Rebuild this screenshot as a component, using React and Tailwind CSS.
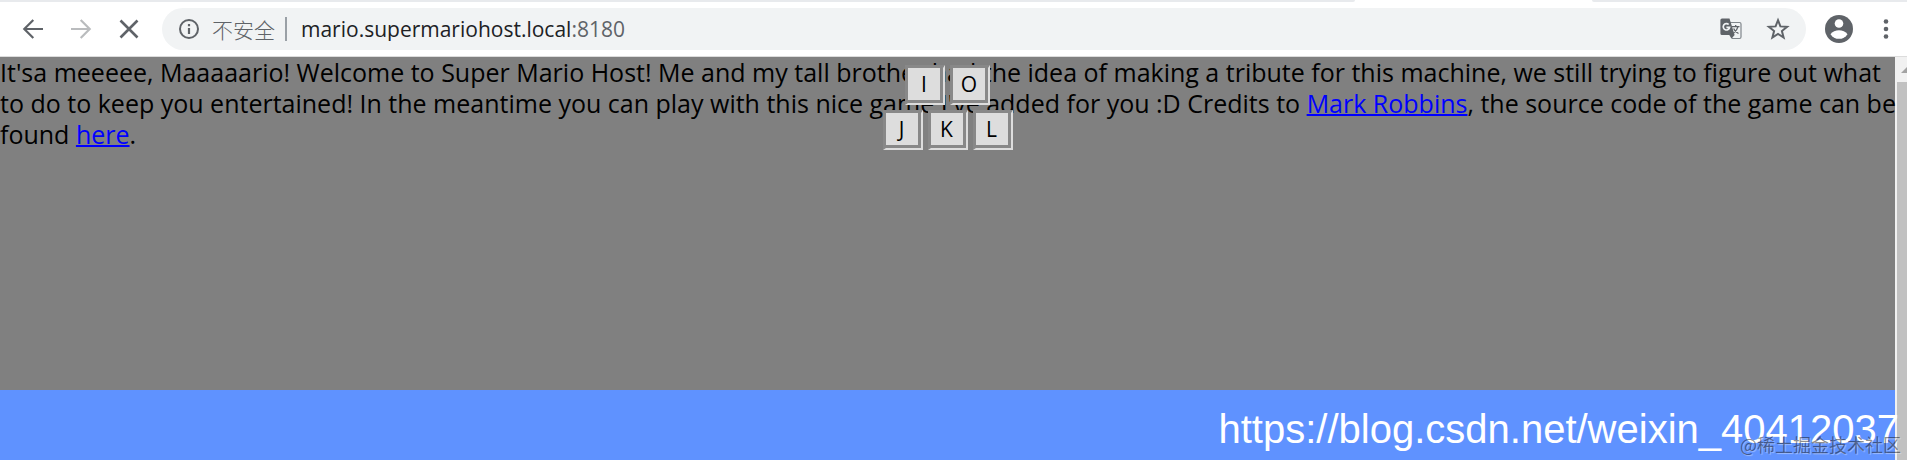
import { useState } from "react";

const KEY_ROWS = [
    ["I", "O"],
    ["J", "K", "L"],
];

function TranslateIcon() {
    return (
        <svg viewBox="0 0 22 22" className="size-[22px]">
            <path d="M9 4.500h10.500a1.500 1.500 0 0 1 1.500 1.500v13a1.500 1.500 0 0 1-1.500 1.500H12" fill="none" stroke="#80868b" strokeWidth="1.2" />
            <path d="M2 .5h7.500L14.600 17H2A1.600 1.600 0 0 1 .4 15.400V2.100A1.600 1.600 0 0 1 2 .5z" fill="#5f6368" />
            <path d="M9.300 17h5.300l-3.100 3.800z" fill="#5f6368" />
            <path d="M8.700 6.500A3.200 3.200 0 1 0 9.600 9.300H6.400" fill="none" stroke="#f1f3f4" strokeWidth="1.7" />
            <path d="M12 8.700h7.500M15.700 7v1.700M18 8.700c-.6 2.600-2.200 4.700-4.400 6.200M13.600 10.500c.9 2 2.600 3.900 4.900 5" fill="none" stroke="#5f6368" strokeWidth="1.3" />
        </svg>
    );
}

function Toolbar() {
    const [host, setHost] = useState("mario.supermariohost.local");

    return (
        <header className="bg-white border-b border-[#dcdcdc]">
            {/* Bottom edge of the tab strip, with the gap of the active tab */}
            <div className="flex h-0.5">
                <div className="flex-1 bg-[#e8eaed] rounded-br-sm" />
                <div className="w-[237px]" />
                <div className="w-[315px] bg-[#e8eaed] rounded-bl-sm" />
            </div>

            <div className="flex items-center h-[54px] pl-[21px] pr-[14px]">
                <div className="flex items-center gap-6 text-[#5f6368]">
                    <button aria-label="Back" className="size-6">
                        <svg viewBox="0 0 24 24" fill="none" stroke="currentColor" strokeWidth="2.2">
                            <path d="M22 12H3.500M12.300 3L3.300 12l9 9" />
                        </svg>
                    </button>
                    <button aria-label="Forward" className="size-6 text-[#babcbe]">
                        <svg viewBox="0 0 24 24" fill="none" stroke="currentColor" strokeWidth="2.2">
                            <path d="M2 12h18.500M11.700 3l9 9-9 9" />
                        </svg>
                    </button>
                    <button aria-label="Stop" className="size-6">
                        <svg viewBox="0 0 24 24" fill="none" stroke="currentColor" strokeWidth="2.6">
                            <path d="M3.500 3.500l17 17M20.500 3.500l-17 17" />
                        </svg>
                    </button>
                </div>

                <div className="flex flex-1 items-center h-[42px] ml-[21px] pl-4 pr-4 rounded-full bg-[#f1f3f4]">
                    <button aria-label="Site information" className="size-[22px] text-[#5f6368]">
                        <svg viewBox="0 0 22 22" fill="none" stroke="currentColor" strokeWidth="2">
                            <circle cx="11" cy="11" r="9" />
                            <path d="M11 10v6M11 6v2.200" strokeWidth="2.2" />
                        </svg>
                    </button>
                    <span className="ml-3 text-[21px] leading-6 font-light text-[#5f6368] font-['Noto_Sans_CJK_SC',sans-serif]">不安全</span>
                    <div className="w-0.5 h-6 ml-2.5 bg-[#9aa0a6]" />
                    <div className="flex flex-1 ml-3.5 text-[21px] leading-6">
                        <input
                            aria-label="Address"
                            value={host}
                            onChange={(e) => setHost(e.target.value)}
                            className="field-sizing-content text-[#202124] outline-none"
                        />
                        <span className="text-[#5f6368]">:8180</span>
                    </div>
                    <button aria-label="Translate this page">
                        <TranslateIcon />
                    </button>
                    <button aria-label="Bookmark" className="ml-6 size-6 text-[#5f6368]">
                        <svg viewBox="0 0 24 24" fill="none" stroke="currentColor" strokeWidth="2">
                            <path d="M12 3.200l2.400 6.200 6.700.4-5.200 4.200 1.700 6.500-5.600-3.600-5.600 3.600 1.700-6.500-5.200-4.200 6.700-.4z" />
                        </svg>
                    </button>
                </div>

                <button aria-label="Profile" className="ml-[19px] size-7">
                    <svg viewBox="0 0 28 28">
                        <circle cx="14" cy="14" r="14" fill="#5f6368" />
                        <circle cx="14" cy="8.500" r="4.300" fill="#fff" />
                        <path d="M5.500 19.300c1.700-2.700 5.300-4 8.500-4s6.800 1.300 8.500 4a10.200 10.200 0 0 1-17 0z" fill="#fff" />
                    </svg>
                </button>
                <button aria-label="Menu" className="ml-[26px] w-[14px] text-[#5f6368]">
                    <svg viewBox="0 0 14 24" fill="currentColor">
                        <circle cx="7" cy="4.500" r="2.300" />
                        <circle cx="7" cy="12" r="2.300" />
                        <circle cx="7" cy="19.500" r="2.300" />
                    </svg>
                </button>
            </div>
        </header>
    );
}

function Keypad() {
    return (
        <div className="absolute inset-x-0 top-2 flex flex-col items-center gap-[5px]">
            {KEY_ROWS.map((row) => (
                <div key={row[0]} className="flex gap-[5px]">
                    {row.map((k) => (
                        <button
                            key={k}
                            className="size-10 border-t-[3px] border-l-[3px] border-b-2 border-r-2 border-t-[#888] border-l-[#888] border-b-[#ddd] border-r-[#ddd]"
                        >
                            <span className="flex items-center justify-center size-full bg-[#ddd] border-r-[3px] border-b-[3px] border-[#888] text-[21px] leading-6">
                                {k}
                            </span>
                        </button>
                    ))}
                </div>
            ))}
        </div>
    );
}

function Scrollbar() {
    return (
        <div className="flex flex-col w-3 shrink-0 pl-0.5 overflow-hidden bg-[#f1f1f1]">
            <div className="flex items-center h-[25px] pl-1">
                <svg viewBox="0 0 12 6" className="w-3 h-1.5 shrink-0">
                    <path d="M0 6l6-6 6 6z" fill="#a3a3a3" />
                </svg>
            </div>
            <div className="flex-1 bg-[#c1c1c1]" />
        </div>
    );
}

export default function App() {
    return (
        <div className="relative flex flex-col min-h-screen overflow-hidden font-['Open_Sans','Noto_Sans',sans-serif]">
            <Toolbar />

            <div className="flex flex-1">
                <main className="relative flex flex-col flex-1 min-w-0 bg-[#808080]">
                    <p className="flex-1 whitespace-nowrap text-[25px] leading-[31px] text-black">
                        It'sa meeeee, Maaaaario! Welcome to Super Mario Host! Me and my tall brother had the idea of making a tribute for this machine, we still trying to figure out what
                        <br />
                        to do to keep you entertained! In the meantime you can play with this nice game I've added for you :D Credits to{" "}
                        <a href="#mark" className="text-[#0000ff] underline decoration-2">Mark Robbins</a>, the source code of the game can be
                        <br />
                        found <a href="#source" className="text-[#0000ff] underline decoration-2">here</a>.
                    </p>
                    <Keypad />
                    <div className="h-[70px] bg-[#5f92ff]" />
                </main>
                <Scrollbar />
            </div>

            {/* Watermarks over the page */}
            <div className="absolute right-2 bottom-2 text-[40px] leading-[46px] text-white font-['Liberation_Sans',Arial,sans-serif]">
                https://blog.csdn.net/weixin_40412037
            </div>
            <div className="absolute right-1.5 bottom-1 text-[18px] leading-6 text-black/45 [text-shadow:1px_1px_1px_rgba(255,255,255,0.4)] font-['Noto_Sans_CJK_SC',sans-serif]">
                @稀土掘金技术社区
            </div>
        </div>
    );
}
